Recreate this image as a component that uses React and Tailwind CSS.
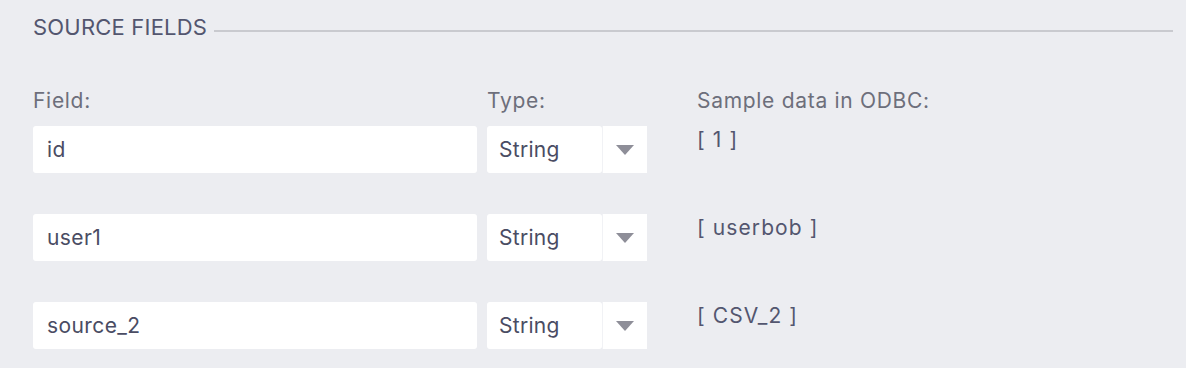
export default function App() {
  const rows = [
    { field: "id", sample: "[ 1 ]" },
    { field: "user1", sample: "[ userbob ]" },
    { field: "source_2", sample: "[ CSV_2 ]" },
  ];
  return (
    <div
      className="w-[1186px] h-[368px] bg-[#ecedf1] overflow-hidden"
      style={{ fontFamily: "Inter, Lato, sans-serif" }}
    >
      <div className="flex items-center pl-[33px] pr-[13px] pt-[14px]">
        <span className="text-[22px] leading-[26px] text-[#53566f] tracking-[0.2px]">SOURCE FIELDS</span>
        <div className="flex-1 h-[2px] bg-[#c9cacf] ml-[7px] mt-[8px]" />
      </div>
      <div className="flex pl-[33px] mt-[50px] text-[21px] leading-[22px] text-[#6d6f7b] tracking-[0.7px]">
        <div className="w-[454px]">Field:</div>
        <div className="w-[210px]">Type:</div>
        <div>Sample data in ODBC:</div>
      </div>
      <div className="flex flex-col gap-[41px] pl-[33px] mt-[14px]">
        {rows.map((r, i) => (
          <div key={i} className="flex h-[47px]">
            <div className="w-[444px] h-[47px] bg-white rounded-[3px] flex items-center pl-[14px] text-[21px] tracking-[0.4px] text-[#4a4c63]">
              {r.field}
            </div>
            <div className="ml-[10px] flex h-[47px]">
              <div className="w-[115px] bg-white rounded-[3px] flex items-center pl-[12px] text-[21px] tracking-[0.3px] text-[#4a4c63]">
                String
              </div>
              <div className="w-px bg-[#f1f2f5]" />
              <div className="w-[44px] bg-white flex items-center justify-center">
                <svg width="18" height="10" viewBox="0 0 18 10">
                  <path d="M0 0 H18 L9 10 Z" fill="#8e8e98" />
                </svg>
              </div>
            </div>
            <div className="ml-[50px] pt-[3px] text-[21px] leading-[22px] tracking-[1.1px] text-[#53566f]">{r.sample}</div>
          </div>
        ))}
      </div>
    </div>
  );
}
